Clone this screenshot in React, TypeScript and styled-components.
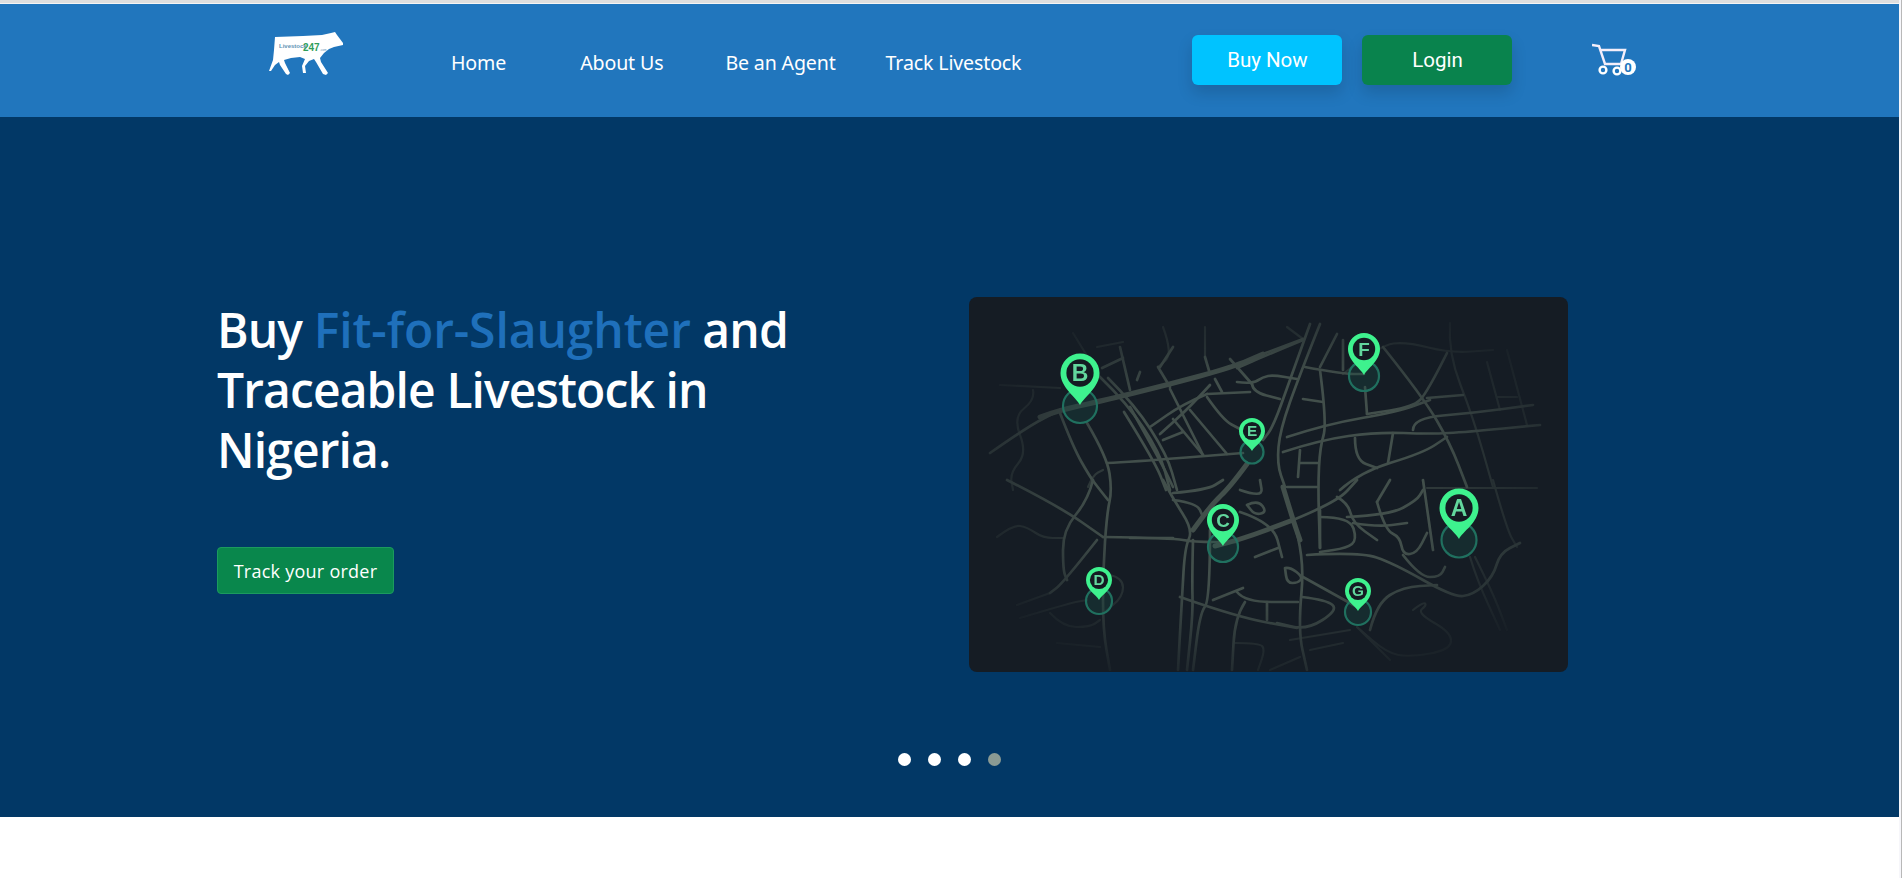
import React from "react";
import styled, { createGlobalStyle } from "styled-components";

const GlobalStyle = createGlobalStyle`
  html, body {
    margin: 0;
    padding: 0;
    background: #fff;
    overflow: hidden;
  }
  * { box-sizing: border-box; }
`;

const Page = styled.div`
  display: grid;
  grid-template-columns: 1fr 3px;
  width: 1902px;
  height: 878px;
  overflow: hidden;
`;

const Content = styled.div`
  display: flex;
  flex-direction: column;
  min-width: 0;
`;

const Scrollbar = styled.div`
  background: #f6f6fa;
  border-right: 1px solid #b8b8b8;
`;

const BrowserEdge = styled.div`
  height: 4px;
  background: #dedede;
  border-bottom: 1px solid #f4f4f4;
`;

const Header = styled.header`
  display: flex;
  align-items: center;
  height: 113px;
  padding-left: 268px;
  background: #2176bd;
`;

const LogoBox = styled.a`
  display: block;
  width: 78px;
  height: 46px;
  margin-top: -14px;
  margin-right: 105px;
`;

const NavList = styled.nav`
  display: flex;
  align-items: center;
  margin-top: 4px;
  margin-right: 171px;
`;

const NavLink = styled.a<{ $gap: number }>`
  margin-right: ${(p) => p.$gap}px;
  color: #fff;
  font-family: "Noto Sans", sans-serif;
  font-size: 19.6px;
  line-height: 24px;
  letter-spacing: -0.15px;
  white-space: nowrap;

  &:last-child {
    margin-right: 0;
  }
`;

const ActionButton = styled.button<{ $bg: string }>`
  width: 150px;
  height: 50px;
  margin-right: 20px;
  margin-top: -2px;
  border: 0;
  border-radius: 6px;
  background: ${(p) => p.$bg};
  box-shadow: 0 8px 16px rgba(0, 0, 0, 0.14);
  color: #fff;
  font-family: Roboto, sans-serif;
  font-size: 20.5px;
`;

const CartBox = styled.div`
  width: 46px;
  height: 34px;
  margin-left: 60px;
  margin-top: -1px;
`;

const Hero = styled.section`
  display: flex;
  flex-direction: column;
  height: 700px;
  padding-top: 180px;
  background: #023866;
`;

const HeroRow = styled.div`
  display: flex;
  align-items: flex-start;
  padding-left: 217px;
`;

const HeroText = styled.div`
  width: 752px;
  padding-top: 3px;
`;

const Title = styled.h1`
  width: 640px;
  margin: 0 0 67px;
  color: #fff;
  font-family: "Open Sans", sans-serif;
  font-size: 48px;
  font-weight: 600;
  line-height: 60px;
  letter-spacing: -0.9px;
`;

const TitleAccent = styled.span`
  color: #1f70bb;
  letter-spacing: -0.1px;
`;

const TrackButton = styled.button`
  width: 177px;
  height: 47px;
  padding: 0;
  border: 1px solid #1c9a5e;
  border-radius: 4px;
  background: #09874c;
  color: #fff;
  font-family: "Open Sans", sans-serif;
  font-size: 18px;
  letter-spacing: 0.25px;
`;

const MapCard = styled.div`
  width: 599px;
  height: 375px;
  border-radius: 8px;
  background: #151c24;
  overflow: hidden;
`;

const MapSvg = styled.svg`
  display: block;
  width: 100%;
  height: 100%;
`;

const Road = styled.path<{ $kind: "thick" | "mid" | "faint" }>`
  fill: none;
  stroke-linecap: round;
  stroke-linejoin: round;
  stroke: ${(p) => (p.$kind === "faint" ? "#2e3839" : "#424f4b")};
  stroke-width: ${(p) => (p.$kind === "thick" ? 5 : p.$kind === "mid" ? 2.7 : 2.2)};
`;

const PinLetter = styled.text`
  fill: #62d79d;
  font-family: "Liberation Sans", sans-serif;
  font-weight: 700;
  text-anchor: middle;
`;

const Dots = styled.div`
  display: flex;
  justify-content: center;
  gap: 17px;
  margin-top: 81px;
`;

const Dot = styled.span<{ $dim?: boolean }>`
  width: 13px;
  height: 13px;
  border-radius: 50%;
  background: ${(p) => (p.$dim ? "#8a9a93" : "#fff")};
`;

const thick: string[] = [
  "1040,417 1060,410 1097,402 1167,385 1233,367 1263,354",
  "1247,464 1230,487 1213,503 1193,530",
  "1283,487 1293,520 1300,540",
  "1215,546 1240,540 1293,520",
];

const mid: string[] = [
  "990,453 1027,427 1060,410",
  "1263,354 1303,339",
  "1060,413 1073,447 1090,477 1100,490 1108,500",
  "1087,423 1107,457 1112,490 1107,513 1103,570 1103,630 1110,670",
  "1100,377 1127,403 1160,453 1170,490",
  "1108,378 1135,405 1167,455 1177,490",
  "1310,324 1290,380 1273,427 1263,440",
  "1320,324 1300,374 1280,430 1277,464 1285,487",
  "1107,463 1130,462 1243,453",
  "1283,452 1320,440 1377,432 1430,434 1467,432 1540,425",
  "1287,437 1327,424 1397,412 1430,400",
  "1320,370 1327,424 1320,447 1318,487 1320,548",
  "1305,367 1343,374 1364,374",
  "1365,387 1367,414",
  "1343,340 1343,370",
  "1337,334 1320,367",
  "1383,347 1423,397 1450,443 1467,487",
  "1447,353 1427,393 1413,407 1367,414",
  "1427,398 1463,395",
  "1413,430 1413,418 1473,413 1533,405",
  "1393,433 1388,463",
  "1355,438 1355,460 1377,468",
  "1340,490 1360,472 1423,453 1447,437",
  "1300,450 1298,477",
  "1300,463 1318,463",
  "1303,340 1267,355 1237,368",
  "1237,382 1252,384 1263,377 1273,375 1297,379",
  "1252,384 1253,392 1280,399",
  "1303,399 1323,402",
  "1230,359 1252,384",
  "1207,394 1250,392",
  "1207,394 1183,404 1150,427",
  "1210,385 1190,407 1160,434",
  "1170,389 1203,455",
  "1190,410 1227,454",
  "1173,419 1203,455",
  "1163,440 1183,432",
  "1207,397 1223,420 1240,429",
  "1215,379 1222,392",
  "1130,407 1160,460 1173,487",
  "1124,412 1155,462 1166,490",
  "1158,367 1170,387",
  "1205,357 1210,374",
  "1007,480 1060,507 1103,537",
  "1093,480 1088,500 1063,530 1063,570 1067,580",
  "1103,537 1173,538 1193,542 1237,542",
  "1097,540 1063,583 1050,593",
  "1163,480 1172,497 1193,530 1185,547 1182,597 1178,670",
  "1193,540 1192,580 1193,613 1187,670",
  "1210,530 1210,600 1200,613 1193,670",
  "1180,597 1237,617 1297,628",
  "1213,600 1243,588",
  "1237,592 1245,602 1298,602",
  "1245,602 1235,617 1232,670",
  "1267,602 1267,620",
  "1293,520 1305,555 1298,630 1307,670",
  "1293,520 1337,502 1357,480",
  "1307,555 1360,552 1393,563 1453,597 1473,595 1493,577 1500,553 1520,543",
  "1370,630 1377,603 1403,587 1437,585",
  "1320,510 1320,548",
  "1320,517 1350,517 1357,540 1347,548 1320,552",
  "1287,487 1317,487",
  "1337,497 1348,503 1353,523 1377,540",
  "1353,523 1377,527 1407,523",
  "1377,502 1385,530 1400,537 1403,555 1417,553 1427,533",
  "1347,517 1390,515 1417,500 1423,490",
  "1377,502 1390,480",
  "1403,555 1420,577 1440,577 1445,567",
  "1423,480 1433,550",
  "1173,493 1207,490 1223,480",
  "1173,500 1197,503 1203,517",
  "1240,490 1263,498 1260,480",
  "1247,505 1258,500 1267,512 1255,515 1247,505",
  "1240,512 1273,523 1282,557",
  "1255,557 1278,548",
  "1130,538 1173,538",
  "1285,568 1290,567 1303,577 1298,583 1287,583 1285,568",
  "1303,577 1357,607",
  "1302,597 1327,600 1338,610 1307,630 1277,623",
  "1120,347 1130,390",
  "1160,367 1173,347",
  "1102,368 1123,358",
  "1137,380 1140,372",
];

const faint: string[] = [
  "1097,347 1123,342",
  "1000,385 1060,388",
  "1033,390 1035,400 1013,417 1027,453 1010,473 1013,490",
  "1073,333 1100,377",
  "1163,327 1173,354 1158,367",
  "1205,327 1205,357",
  "1287,327 1303,339",
  "1343,374 1380,345 1407,342 1450,353 1493,350",
  "1450,323 1448,353 1473,417 1493,487",
  "1487,362 1500,410",
  "1507,350 1527,425",
  "1497,397 1517,397",
  "997,537 1013,525 1027,527 1043,538 1063,538",
  "1110,575 1123,578 1123,597 1103,613",
  "1020,618 1070,603 1087,600",
  "1050,613 1063,627 1090,627 1100,620",
  "1057,643 1100,647",
  "1017,605 1050,593",
  "1235,643 1260,643 1265,650 1258,670",
  "1310,650 1343,643",
  "1270,670 1300,657",
  "1357,627 1390,660",
  "1413,610 1423,602 1427,605 1417,613 1452,633 1450,650 1410,657 1387,653 1357,627",
  "1470,557 1477,580 1500,630",
  "1475,557 1493,593 1507,630",
  "1493,480 1507,530 1517,547",
  "1427,488 1537,488",
  "1290,640 1350,630",
  "1088,487 1093,475 1103,470",
];

// rounds the traced corners: each vertex becomes the control of a curve between midpoints
const smoothPath = (points: string) => {
  const pts = points.split(" ").map((p) => p.split(",").map(Number));
  let d = `M${pts[0][0]} ${pts[0][1]}`;
  for (let i = 1; i < pts.length - 1; i++) {
    const mx = (pts[i][0] + pts[i + 1][0]) / 2;
    const my = (pts[i][1] + pts[i + 1][1]) / 2;
    d += ` Q${pts[i][0]} ${pts[i][1]} ${mx} ${my}`;
  }
  const last = pts[pts.length - 1];
  return `${d} L${last[0]} ${last[1]}`;
};

const pins = [
  { letter: "B", cx: 1080, cy: 373, r: 19.5, tip: 405, haloR: 17 },
  { letter: "E", cx: 1252, cy: 431, r: 13, tip: 451, haloR: 11.5 },
  { letter: "F", cx: 1364, cy: 349, r: 16, tip: 375, haloR: 15 },
  { letter: "C", cx: 1223, cy: 520, r: 16, tip: 546, haloR: 15 },
  { letter: "D", cx: 1099, cy: 580, r: 13, tip: 600, haloR: 13 },
  { letter: "A", cx: 1459, cy: 508, r: 19.5, tip: 539, haloR: 17.5 },
  { letter: "G", cx: 1358, cy: 591, r: 13, tip: 611, haloR: 13 },
];

const MapPin = ({ letter, cx, cy, r, tip, haloR }: (typeof pins)[number]) => (
  <g>
    <circle cx={cx} cy={tip + 1} r={haloR} fill="#1c5a50" fillOpacity={0.25} stroke="#20705f" strokeWidth={2.2} />
    <path
      d={`M${cx} ${tip} C${cx - r * 0.2} ${tip - r * 0.4} ${cx - r} ${cy + r * 0.75} ${cx - r} ${cy} A${r} ${r} 0 1 1 ${cx + r} ${cy} C${cx + r} ${cy + r * 0.75} ${cx + r * 0.2} ${tip - r * 0.4} ${cx} ${tip} Z`}
      fill="#3ef28e"
    />
    <circle cx={cx} cy={cy} r={r * 0.7} fill="#141b22" />
    <PinLetter x={cx} y={cy + r * 0.42} fontSize={r * 1.18}>
      {letter}
    </PinLetter>
  </g>
);

const CityMap = () => (
  <MapSvg viewBox="969 297 599 375">
    <defs>
      <filter id="soft" colorInterpolationFilters="sRGB">
        <feGaussianBlur stdDeviation="0.6" />
      </filter>
      <radialGradient id="edgeFade" cx="50%" cy="50%" r="60%">
        <stop offset="48%" stopColor="#fff" />
        <stop offset="100%" stopColor="#000" />
      </radialGradient>
      <mask id="roadFade">
        <rect x="969" y="297" width="599" height="375" fill="url(#edgeFade)" />
      </mask>
    </defs>
    <g mask="url(#roadFade)">
      <g filter="url(#soft)">
        {faint.map((points) => (
          <Road key={points} d={smoothPath(points)} $kind="faint" />
        ))}
        {mid.map((points) => (
          <Road key={points} d={smoothPath(points)} $kind="mid" />
        ))}
        {thick.map((points) => (
          <Road key={points} d={smoothPath(points)} $kind="thick" />
        ))}
      </g>
    </g>
    <g filter="url(#soft)">
      {pins.map((pin) => (
        <MapPin key={pin.letter} {...pin} />
      ))}
    </g>
  </MapSvg>
);

const CowLogo = () => (
  <svg width="78" height="46" viewBox="268 31 78 46">
    <path
      d="M275 37 L303 36 L322 35 L331 33 L335 32 L337 35 L343 43 L343 45 L334 47 L329 49 L324 53 L320 58 L321 62 L328 73 L326 75 L323 74 L316 62 L314 59 L309 61 L305 66 L306 73 L303 73 L302 66 L305 59 L300 57 L291 58 L284 60 L285 63 L290 73 L288 75 L286 74 L280 65 L279 62 L275 65 L271 71 L269 71 L273 60 L274 50 Z"
      fill="#fff"
    />
    <text x="279" y="48" fontSize="6" fontWeight="700" fill="#5f93b5" fontFamily="Liberation Sans, sans-serif">
      Livestock
    </text>
    <text x="303" y="51" fontSize="10" fontWeight="700" fill="#2f9e5b" fontFamily="Liberation Sans, sans-serif">
      247
    </text>
    <text x="320" y="51" fontSize="3" fill="#5f93b5" fontFamily="Liberation Sans, sans-serif">
      .com
    </text>
  </svg>
);

const CartIcon = () => (
  <svg width="46" height="34" viewBox="1593 44 46 34">
    <path
      d="M1593 46 L1600 47 L1606 65 L1622 65 L1626 51 L1602 51"
      fill="none"
      stroke="#f4eefa"
      strokeWidth="2.4"
    />
    <circle cx="1604" cy="71" r="3.4" fill="none" stroke="#fff" strokeWidth="2.4" />
    <circle cx="1618" cy="72" r="3.4" fill="none" stroke="#fff" strokeWidth="2.4" />
    <circle cx="1629" cy="68" r="8" fill="#fff" />
    <text x="1629" y="73" fontSize="13" fontWeight="700" fill="#2176bd" textAnchor="middle" fontFamily="Roboto, sans-serif">
      0
    </text>
  </svg>
);

export default function App() {
  return (
    <Page>
      <GlobalStyle />
      <Content>
        <BrowserEdge />
        <Header>
          <LogoBox>
            <CowLogo />
          </LogoBox>
          <NavList>
            <NavLink $gap={74}>Home</NavLink>
            <NavLink $gap={62}>About Us</NavLink>
            <NavLink $gap={50}>Be an Agent</NavLink>
            <NavLink $gap={0}>Track Livestock</NavLink>
          </NavList>
          <ActionButton $bg="#00c3ff">Buy Now</ActionButton>
          <ActionButton $bg="#09834d">Login</ActionButton>
          <CartBox>
            <CartIcon />
          </CartBox>
        </Header>
        <Hero>
          <HeroRow>
            <HeroText>
              <Title>
                Buy <TitleAccent>Fit-for-Slaughter</TitleAccent> and
                <br />
                Traceable Livestock in
                <br />
                Nigeria.
              </Title>
              <TrackButton>Track your order</TrackButton>
            </HeroText>
            <MapCard>
              <CityMap />
            </MapCard>
          </HeroRow>
          <Dots>
            <Dot />
            <Dot />
            <Dot />
            <Dot $dim />
          </Dots>
        </Hero>
      </Content>
      <Scrollbar />
    </Page>
  );
}
